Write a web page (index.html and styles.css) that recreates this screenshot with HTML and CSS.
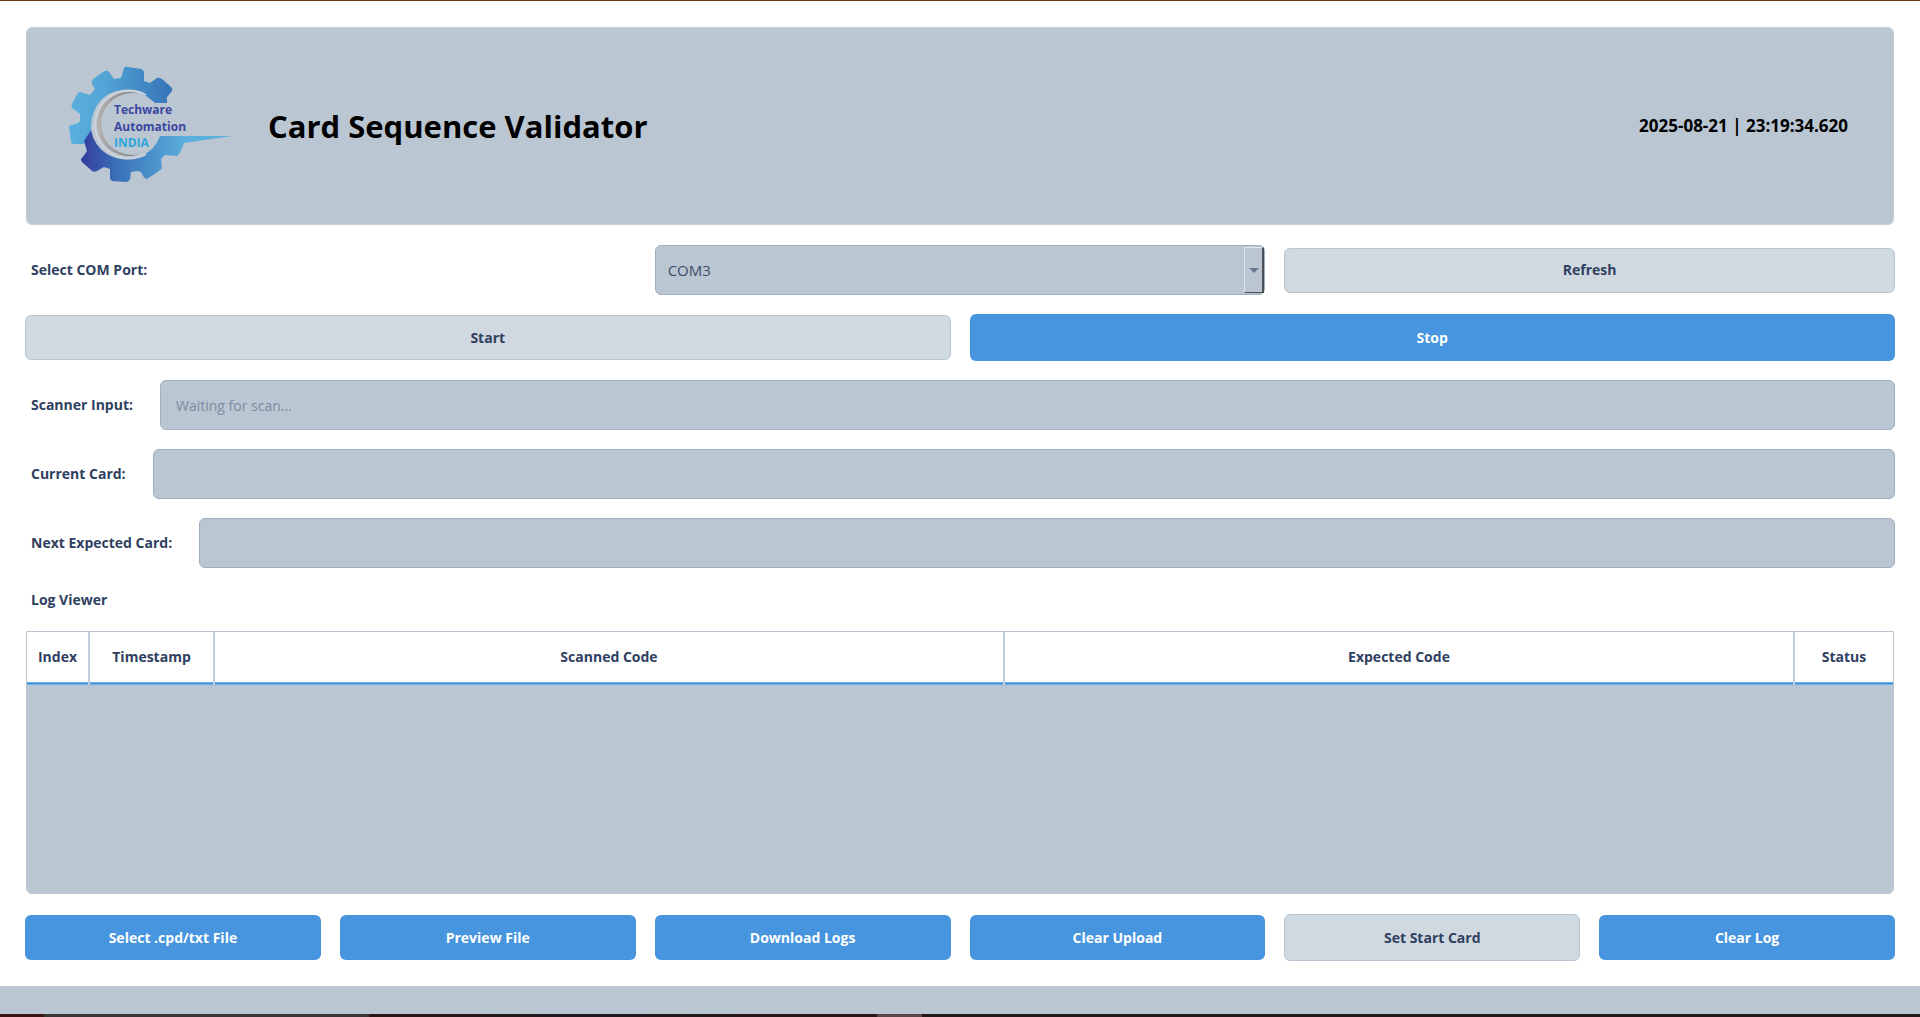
FILE: index.html
```html
<!DOCTYPE html>
<html lang="en">
<head>
<meta charset="utf-8">
<title>Card Sequence Validator</title>
<link rel="stylesheet" href="styles.css">
</head>
<body>
<main class="content">
  <header class="banner">
    <svg class="logo" viewBox="0 0 180 130" role="img" aria-label="Techware Automation India">
      <defs>
        <linearGradient id="upper" gradientUnits="userSpaceOnUse" x1="8" y1="0" x2="113" y2="0">
          <stop offset="0" stop-color="#59b0dd"/><stop offset=".35" stop-color="#52a4d6"/><stop offset="1" stop-color="#3573b8"/>
        </linearGradient>
        <linearGradient id="lower" gradientUnits="userSpaceOnUse" x1="20" y1="0" x2="125" y2="0">
          <stop offset="0" stop-color="#333b9c"/><stop offset=".35" stop-color="#3a70b7"/><stop offset="1" stop-color="#5aafdd"/>
        </linearGradient>
        <linearGradient id="ring" x1="0" y1="0" x2="1" y2="0">
          <stop offset="0" stop-color="#b5b3b3"/><stop offset="1" stop-color="#777"/>
        </linearGradient>
      </defs>
      <path fill="url(#upper)" d="M24 84 L14 84 Q11 84 11 81 L9 67 Q9 65 12 65 L18 63 Q20 62 20 60 L20 54 L12 48 Q11 47 12 44 L18 33 Q20 31 23 33 L30 35 L35 29 L32 24 Q31 21 33 19 L43 12 Q47 9 49 12 L54 19 L61 18 L64 8 Q65 6 68 7 L81 9 Q84 10 84 13 L84 21 L90 23 L97 18 Q99 17 102 19 L111 27 Q113 29 112 31 L107 37 L107 43 L95 43 Q82 30 66 30 Q46 30 36 47 Q30 59 31 71 Z"/>
      <path fill="url(#lower)" d="M31 70 Q34 86 47 94 Q62 103 79 97 Q95 91 100 76 L172 76 L124 83 Q119 96 117 96 L105 95 L101 99 L102 108 Q101 110 87 119 Q84 119 81 112 L77 111 L71 112 L70 119 Q69 122 66 122 L52 121 Q50 120 50 118 L50 109 L44 107 L37 111 Q33 113 31 110 L22 102 Q20 99 22 98 L27 91 L24 81 Z"/>
      <path fill="none" stroke="#ced4db" stroke-width="2" d="M86 35 A34 34 0 1 0 86 94"/>
      <path fill="url(#ring)" d="M80 34 A32 32 0 1 0 80 94 A31 31 0 1 1 80 34Z"/>
      <g class="logo-text">
        <text x="54" y="54">Techware</text>
        <text x="54" y="71">Automation</text>
        <text class="logo-country" x="54" y="87">INDIA</text>
      </g>
    </svg>
    <h1 class="title">Card Sequence Validator</h1>
    <time class="clock">2025-08-21 | 23:19:34.620</time>
  </header>

  <div class="row thirds">
    <label class="label" for="port">Select COM Port:</label>
    <div class="combo">
      <select class="field select" id="port"><option>COM3</option></select>
      <span class="drop"></span>
    </div>
    <button class="btn quiet" type="button">Refresh</button>
  </div>

  <div class="row halves">
    <button class="btn quiet" type="button">Start</button>
    <button class="btn tall" type="button">Stop</button>
  </div>

  <div class="row line">
    <label class="label" for="scan">Scanner Input:</label>
    <input class="field" id="scan" type="text" placeholder="Waiting for scan...">
  </div>
  <div class="row line">
    <label class="label" for="current">Current Card:</label>
    <input class="field" id="current" type="text" readonly>
  </div>
  <div class="row line">
    <label class="label" for="next">Next Expected Card:</label>
    <input class="field" id="next" type="text" readonly>
  </div>

  <h2 class="label log-title">Log Viewer</h2>
  <div class="log">
    <table class="log-table">
      <colgroup><col class="c-index"><col class="c-time"><col><col><col class="c-status"></colgroup>
      <thead>
        <tr><th>Index</th><th>Timestamp</th><th>Scanned Code</th><th>Expected Code</th><th>Status</th></tr>
      </thead>
    </table>
  </div>

  <div class="actions">
    <button class="btn" type="button">Select .cpd/txt File</button>
    <button class="btn" type="button">Preview File</button>
    <button class="btn" type="button">Download Logs</button>
    <button class="btn" type="button">Clear Upload</button>
    <button class="btn quiet tall" type="button">Set Start Card</button>
    <button class="btn" type="button">Clear Log</button>
  </div>
</main>
<footer class="status"></footer>
<div class="desktop-edge"></div>
</body>
</html>
```
FILE: styles.css
```css
* { box-sizing: border-box; }

body {
  margin: 0;
  min-height: 100vh;
  display: flex;
  flex-direction: column;
  border-top: 1px solid #6b3a10;
  background: #fff;
  color: #2f4061;
  font: 700 14px/20px "Open Sans", "Noto Sans", sans-serif;
}

.content {
  flex: 1;
  display: flex;
  flex-direction: column;
  gap: 19px;
  padding: 26px 25px 25px;
}

.banner {
  display: flex;
  align-items: center;
  height: 198px;
  margin: 0 1px 1px;
  padding: 0 45px 0 33px;
  border: 1px solid #c5d0da;
  border-radius: 6px;
  background: #bac6d2;
  color: #000;
}

.logo { width: 180px; height: 130px; margin-bottom: 2px; }
.logo-text { font-size: 12px; font-weight: 700; fill: #3a48a0; }
.logo-country { fill: #2ba6dc; }

.title {
  flex: 1;
  margin: 0 0 0 28px;
  font-size: 31px;
  line-height: 44px;
  font-weight: 700;
}

.clock { font-size: 17px; line-height: 24px; font-weight: 700; }

.row { display: grid; gap: 19px; align-items: center; }
.thirds { grid-template-columns: repeat(3, 1fr); }
.halves { grid-template-columns: repeat(2, 1fr); }
.line { grid-template-columns: auto 1fr; }

.label { margin: 0; padding: 0 8px 0 6px; font-size: 14px; font-weight: 700; }
.log-title { line-height: 25px; }

.field {
  width: 100%;
  height: 50px;
  padding: 0 15px;
  border: 1px solid #a0b0c0;
  border-radius: 6px;
  background: #bac6d2;
  color: #3b4d6b;
  font: 400 14px/20px "Open Sans", "Noto Sans", sans-serif;
}
.field::placeholder { color: #7b8ca0; opacity: 1; }

.combo { position: relative; }
.select { display: block; appearance: none; padding: 0 12px; font-size: 15px; }
.drop {
  position: absolute;
  top: 2px;
  right: 1px;
  bottom: 2px;
  width: 20px;
  display: grid;
  place-items: center;
  border: 1px solid #dde5ec;
  border-right: 2px solid #4a4f55;
  border-bottom: 1px solid #4a4f55;
  pointer-events: none;
}
.drop::after {
  content: "";
  border: 5px solid transparent;
  border-top: 5px solid #66778f;
  border-bottom: 0;
}

.btn {
  height: 45px;
  padding: 0 12px;
  border: 0;
  border-radius: 6px;
  background: #4795df;
  color: #fff;
  font: 700 14px/20px "Open Sans", "Noto Sans", sans-serif;
}
.tall { height: 47px; }
.quiet { border: 1px solid #b9c6d2; background: #d0d8e0; color: #2f4061; }

.log {
  flex: 1;
  margin: 0 1px 1px;
  border: 1px solid #bac6d2;
  border-radius: 0 0 6px 6px;
  background: #bac6d2;
}
.log-table {
  width: 100%;
  table-layout: fixed;
  border-collapse: separate;
  border-spacing: 0;
}
.log-table th {
  height: 53px;
  padding: 0 8px 3px;
  border-right: 2px solid #c3ceda;
  background: #fff linear-gradient(#6aabe6 1px, #4795df 1px 2px, #6aabe6 2px) bottom / 100% 3px no-repeat;
  background-clip: padding-box;
}
.log-table th:last-child { border-right: 0; }
.c-index { width: 63px; }
.c-time { width: 125px; }
.c-status { width: 98px; }

.actions {
  display: grid;
  grid-template-columns: repeat(6, 1fr);
  gap: 19px;
  align-items: center;
}

.status { height: 28px; background: #bac6d2; }
.desktop-edge {
  height: 3px;
  background: linear-gradient(90deg, #3c1512 2.3%, #3a3636 2.3% 19.2%, #2c1616 19.2%, #1f1a20 30%, #2a1617 45.7%, #5a4445 45.7% 48%, #241a1c 48%);
}
```
